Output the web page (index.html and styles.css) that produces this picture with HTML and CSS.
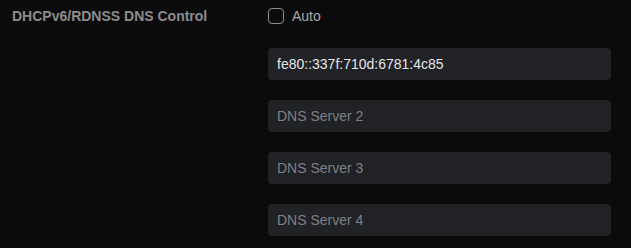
FILE: index.html
```html
<!DOCTYPE html>
<html lang="en">
<head>
  <meta charset="UTF-8" />
  <meta name="viewport" content="width=device-width, initial-scale=1.0"/>
  <title>DNS Control</title>
  <link rel="stylesheet" href="styles.css">
</head>
<body>

  <div class="row">
    <label class="row-label">DHCPv6/RDNSS DNS Control</label>
    <div class="row-fields">
      <label class="check">
        <input type="checkbox" />
        <span>Auto</span>
      </label>
      <input type="text" class="field" value="fe80::337f:710d:6781:4c85" />
      <input type="text" class="field" placeholder="DNS Server 2" />
      <input type="text" class="field" placeholder="DNS Server 3" />
      <input type="text" class="field" placeholder="DNS Server 4" />
    </div>
  </div>

</body>
</html>
```

FILE: styles.css
```css
body {
  font-family: 'Liberation Sans', Arial, sans-serif;
  background: #0b0b0c;
  margin: 0;
  padding: 8px 20px 0 12px;
}

.row {
  display: flex;
  align-items: flex-start;
}

.row-label {
  width: 256px;
  flex: none;
  font-size: 14px;
  font-weight: bold;
  color: #8c8c8e;
  line-height: 16px;
}

.row-fields {
  width: 344px;
  display: flex;
  flex-direction: column;
  gap: 20px;
}

.check {
  display: flex;
  align-items: center;
  gap: 8px;
  height: 16px;
  font-size: 14px;
  color: #a9a9ab;
}

.check input {
  appearance: none;
  margin: 0;
  width: 16px;
  height: 16px;
  border: 1px solid #8e8e92;
  border-radius: 4px;
  background: transparent;
}

.field {
  box-sizing: border-box;
  height: 32px;
  width: 100%;
  margin: 0;
  padding: 0 9px;
  border: none;
  border-radius: 4px;
  background: #212226;
  color: #e6e6e8;
  font-family: inherit;
  font-size: 14px;
  outline: none;
}

.check + .field {
  margin-top: 4px;
}

.field::placeholder {
  color: #7f8084;
}
```
